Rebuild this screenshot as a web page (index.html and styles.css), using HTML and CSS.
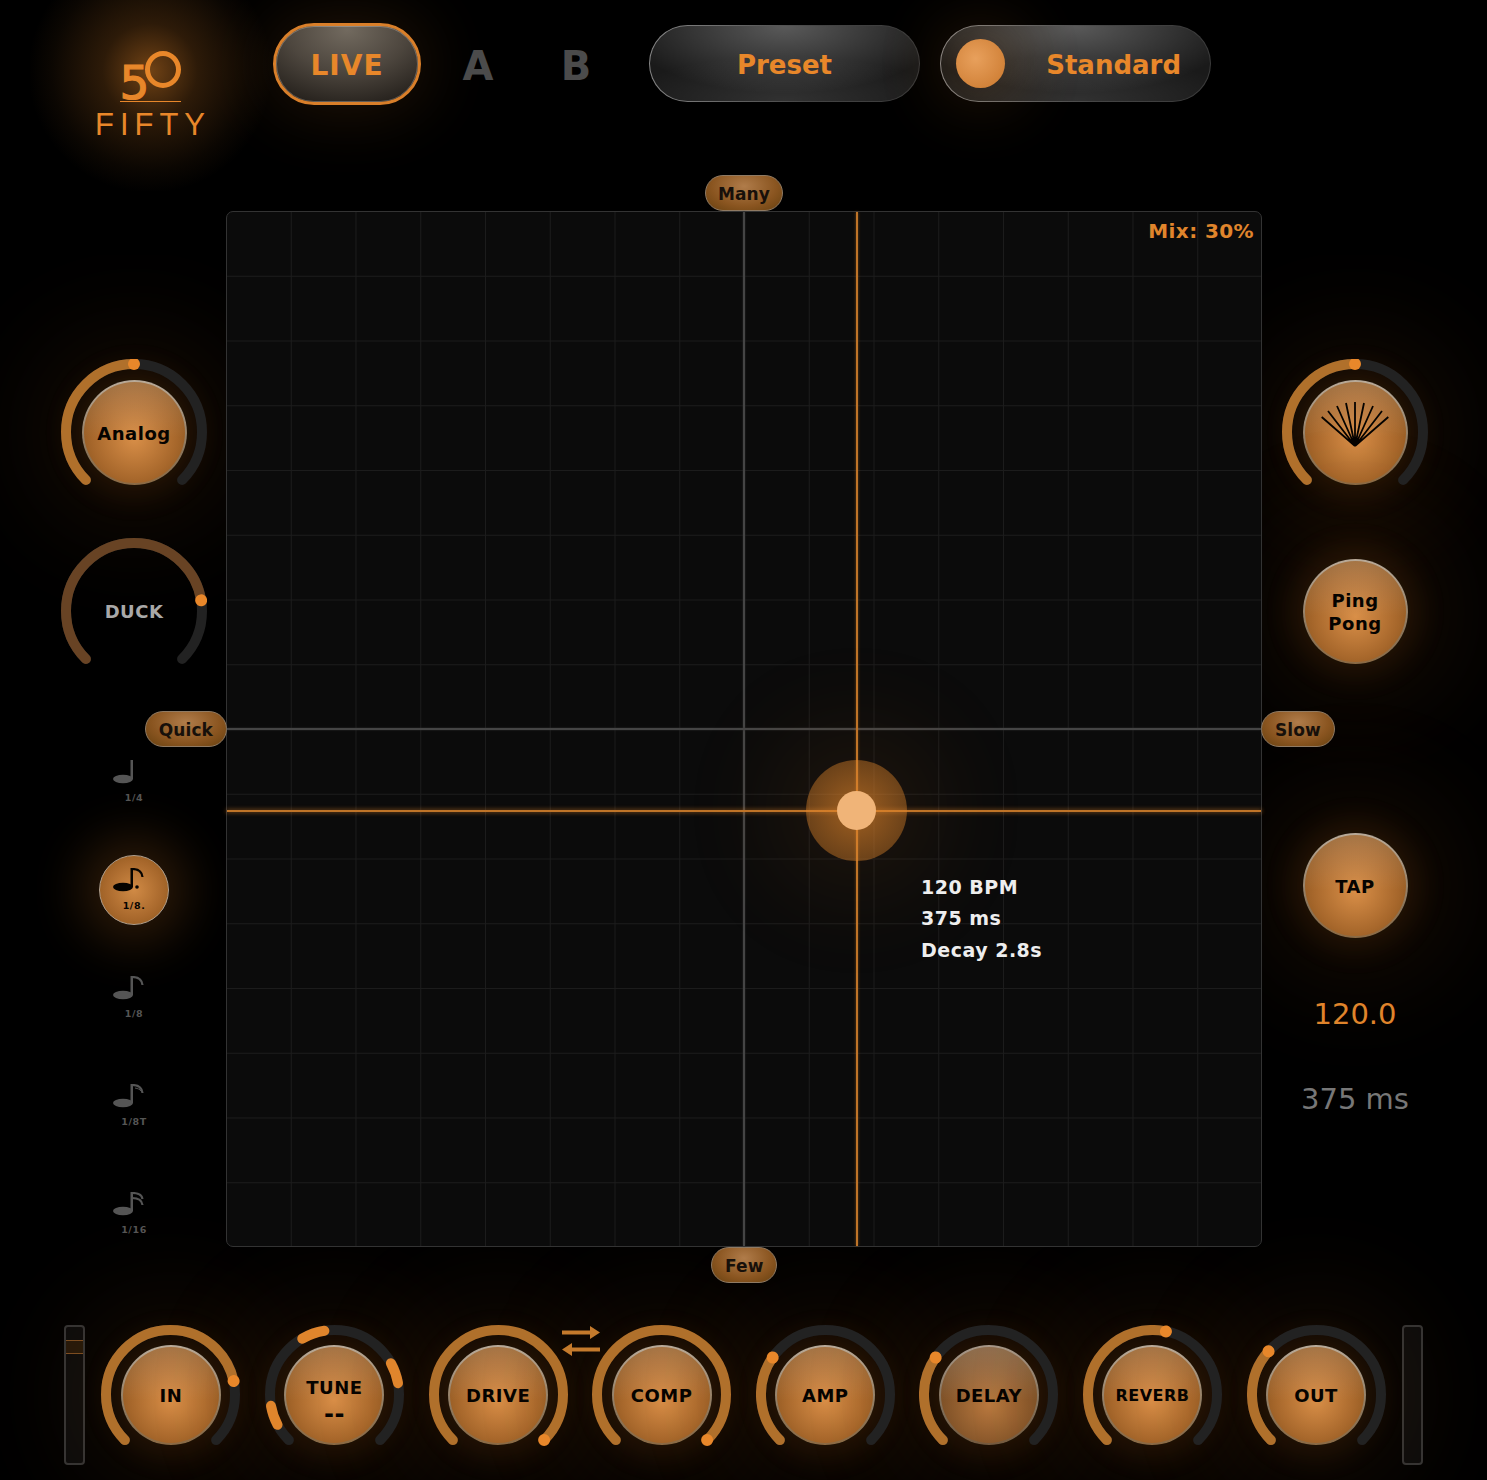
FILE: index.html
```html
<!DOCTYPE html>
<html>
	<head>
		<meta charset="UTF-8">
		<title>Fifty</title>
		<link rel="stylesheet" href="styles.css">
	</head>
	<body>
		<div id="app">
			<div class="header">
				<div class="logo">
					<div class="logoMark"><span class="logoFive">5</span><span class="logoRing"></span></div>
					<div class="logoName">FIFTY</div>
				</div>
				<div class="liveBtn">LIVE</div>
				<div class="slot slotA">A</div>
				<div class="slot">B</div>
				<div class="pill preset">Preset</div>
				<div class="pill toggle"><span class="thumb"></span><span class="toggleText">Standard</span></div>
			</div>

			<div class="middle">
				<div class="sideLeft">
					<div class="knob">
						<svg class="ring" viewBox="0 0 146 146">
							<circle class="track" cx="73" cy="73" r="68" pathLength="360" stroke-dasharray="270 90" transform="rotate(135 73 73)"/>
							<circle class="fill" cx="73" cy="73" r="68" pathLength="360" stroke-dasharray="135 360" transform="rotate(135 73 73)"/>
							<circle class="dot" cx="141" cy="73" r="6" transform="rotate(270 73 73)"/>
						</svg>
						<div class="btn big">Analog</div>
					</div>
					<div class="knob duck">
						<svg class="ring" viewBox="0 0 146 146">
							<circle class="track" cx="73" cy="73" r="68" pathLength="360" stroke-dasharray="270 90" transform="rotate(135 73 73)"/>
							<circle class="fill dim" cx="73" cy="73" r="68" pathLength="360" stroke-dasharray="216 360" transform="rotate(135 73 73)"/>
							<circle class="dot" cx="141" cy="73" r="6" transform="rotate(351 73 73)"/>
						</svg>
						<div class="duckText">DUCK</div>
					</div>
					<div class="notes">
						<div class="note">
							<svg class="noteIcon" viewBox="0 0 42 26"><ellipse cx="10" cy="19" rx="10" ry="4.2"/><rect x="17.5" y="0" width="2.5" height="19"/></svg>
							<span class="noteText">1/4</span>
						</div>
						<div class="note on">
							<svg class="noteIcon" viewBox="0 0 42 26"><ellipse cx="10" cy="19" rx="10" ry="4.2"/><rect x="17.5" y="0" width="2.5" height="19"/><path class="flag" d="M19 1c6 0 10 3 10.500 8"/><circle cx="24" cy="19" r="1.800"/></svg>
							<span class="noteText">1/8.</span>
						</div>
						<div class="note">
							<svg class="noteIcon" viewBox="0 0 42 26"><ellipse cx="10" cy="19" rx="10" ry="4.2"/><rect x="17.5" y="0" width="2.5" height="19"/><path class="flag" d="M19 1c6 0 10 3 10.500 8"/></svg>
							<span class="noteText">1/8</span>
						</div>
						<div class="note">
							<svg class="noteIcon" viewBox="0 0 42 26"><ellipse cx="10" cy="19" rx="10" ry="4.2"/><rect x="17.5" y="0" width="2.5" height="19"/><path class="flag" d="M19 1c6 0 10 3 10.500 8"/><path class="flag thin" d="M22 4c3 .5 5 1.500 6 3"/></svg>
							<span class="noteText">1/8T</span>
						</div>
						<div class="note">
							<svg class="noteIcon" viewBox="0 0 42 26"><ellipse cx="10" cy="19" rx="10" ry="4.2"/><rect x="17.5" y="0" width="2.5" height="19"/><path class="flag" d="M19 1c6 0 10 2 10.500 6"/><path class="flag" d="M19 6c6 0 10 2 10.500 7"/></svg>
							<span class="noteText">1/16</span>
						</div>
					</div>
				</div>

				<div class="pad">
					<div class="tag tagMany">Many</div>
					<div class="tag tagFew">Few</div>
					<div class="tag tagQuick">Quick</div>
					<div class="tag tagSlow">Slow</div>
					<div class="axis axisV"></div>
					<div class="axis axisH"></div>
					<div class="cross crossV"></div>
					<div class="cross crossH"></div>
					<div class="puck"><div class="puckCore"></div></div>
					<div class="mix">Mix: 30%</div>
					<div class="info">120 BPM<br>375 ms<br>Decay 2.8s</div>
				</div>

				<div class="sideRight">
					<div class="knob">
						<svg class="ring" viewBox="0 0 146 146">
							<circle class="track" cx="73" cy="73" r="68" pathLength="360" stroke-dasharray="270 90" transform="rotate(135 73 73)"/>
							<circle class="fill" cx="73" cy="73" r="68" pathLength="360" stroke-dasharray="135 360" transform="rotate(135 73 73)"/>
							<circle class="dot" cx="141" cy="73" r="6" transform="rotate(270 73 73)"/>
						</svg>
						<div class="btn big">
							<svg class="fan" viewBox="0 0 70 46">
								<path d="M35 44L1.700 15M35 44L8 9M35 44L17 4M35 44L26 1M35 44V0M35 44L44 1M35 44L53 4M35 44L62 9M35 44L68.300 15"/>
							</svg>
						</div>
					</div>
					<div class="knob ping">
						<div class="btn big tight">Ping<br>Pong</div>
					</div>
					<div class="knob tap">
						<div class="btn big">TAP</div>
					</div>
					<div class="bpm">120.0</div>
					<div class="ms">375 ms</div>
				</div>
			</div>

			<div class="footer">
				<div class="meter"><div class="meterLevel"></div></div>
				<div class="knobs">
					<div class="knob small">
						<svg class="ring" viewBox="0 0 139 139">
							<circle class="track" cx="69.500" cy="69.500" r="64.500" pathLength="360" stroke-dasharray="270 90" transform="rotate(135 69.500 69.500)"/>
							<circle class="fill" cx="69.500" cy="69.500" r="64.500" pathLength="360" stroke-dasharray="213 360" transform="rotate(135 69.500 69.500)"/>
							<circle class="dot" cx="134" cy="69.500" r="6" transform="rotate(348 69.500 69.500)"/>
						</svg>
						<div class="btn">IN</div>
					</div>
					<div class="knob small">
						<svg class="ring" viewBox="0 0 139 139">
							<circle class="track" cx="69.500" cy="69.500" r="64.500" pathLength="360" stroke-dasharray="270 90" transform="rotate(135 69.500 69.500)"/>
							<circle class="seg" cx="69.500" cy="69.500" r="64.500" pathLength="360" stroke-dasharray="18 360" transform="rotate(152 69.500 69.500)"/>
							<circle class="seg" cx="69.500" cy="69.500" r="64.500" pathLength="360" stroke-dasharray="21 360" transform="rotate(240 69.500 69.500)"/>
							<circle class="seg" cx="69.500" cy="69.500" r="64.500" pathLength="360" stroke-dasharray="19 360" transform="rotate(331 69.500 69.500)"/>
						</svg>
						<div class="btn tune">TUNE<span class="tuneValue">--</span></div>
					</div>
					<div class="knob small">
						<svg class="ring" viewBox="0 0 139 139">
							<circle class="fill" cx="69.500" cy="69.500" r="64.500" pathLength="360" stroke-dasharray="270 90" transform="rotate(135 69.500 69.500)"/>
							<circle class="dot" cx="134" cy="69.500" r="6" transform="rotate(45 69.500 69.500)"/>
						</svg>
						<div class="btn">DRIVE</div>
					</div>
					<div class="knob small">
						<svg class="ring" viewBox="0 0 139 139">
							<circle class="fill" cx="69.500" cy="69.500" r="64.500" pathLength="360" stroke-dasharray="270 90" transform="rotate(135 69.500 69.500)"/>
							<circle class="dot" cx="134" cy="69.500" r="6" transform="rotate(45 69.500 69.500)"/>
						</svg>
						<div class="btn">COMP</div>
						<svg class="swap" viewBox="0 0 38 30">
							<path d="M0 4.500H28V0L38 6.500L28 13V8.500H0Z"/>
							<path d="M38 21.500H10V17L0 23.500L10 30V25.500H38Z"/>
						</svg>
					</div>
					<div class="knob small">
						<svg class="ring" viewBox="0 0 139 139">
							<circle class="track" cx="69.500" cy="69.500" r="64.500" pathLength="360" stroke-dasharray="270 90" transform="rotate(135 69.500 69.500)"/>
							<circle class="fill" cx="69.500" cy="69.500" r="64.500" pathLength="360" stroke-dasharray="80 360" transform="rotate(135 69.500 69.500)"/>
							<circle class="dot" cx="134" cy="69.500" r="6" transform="rotate(215 69.500 69.500)"/>
						</svg>
						<div class="btn">AMP</div>
					</div>
					<div class="knob small">
						<svg class="ring" viewBox="0 0 139 139">
							<circle class="track" cx="69.500" cy="69.500" r="64.500" pathLength="360" stroke-dasharray="270 90" transform="rotate(135 69.500 69.500)"/>
							<circle class="fill" cx="69.500" cy="69.500" r="64.500" pathLength="360" stroke-dasharray="80 360" transform="rotate(135 69.500 69.500)"/>
							<circle class="dot" cx="134" cy="69.500" r="6" transform="rotate(215 69.500 69.500)"/>
						</svg>
						<div class="btn faded">DELAY</div>
					</div>
					<div class="knob small">
						<svg class="ring" viewBox="0 0 139 139">
							<circle class="track" cx="69.500" cy="69.500" r="64.500" pathLength="360" stroke-dasharray="270 90" transform="rotate(135 69.500 69.500)"/>
							<circle class="fill" cx="69.500" cy="69.500" r="64.500" pathLength="360" stroke-dasharray="147 360" transform="rotate(135 69.500 69.500)"/>
							<circle class="dot" cx="134" cy="69.500" r="6" transform="rotate(282 69.500 69.500)"/>
						</svg>
						<div class="btn narrow">REVERB</div>
					</div>
					<div class="knob small">
						<svg class="ring" viewBox="0 0 139 139">
							<circle class="track" cx="69.500" cy="69.500" r="64.500" pathLength="360" stroke-dasharray="270 90" transform="rotate(135 69.500 69.500)"/>
							<circle class="fill" cx="69.500" cy="69.500" r="64.500" pathLength="360" stroke-dasharray="87 360" transform="rotate(135 69.500 69.500)"/>
							<circle class="dot" cx="134" cy="69.500" r="6" transform="rotate(222 69.500 69.500)"/>
						</svg>
						<div class="btn">OUT</div>
					</div>
				</div>
				<div class="meter"></div>
			</div>
		</div>
	</body>
</html>
```

FILE: styles.css
```css
*{
	margin:0;
	padding:0;
	box-sizing:border-box;
}
html,body{
	background:#000;
}
body{
	font-family:"DejaVu Sans",sans-serif;
	font-weight:bold;
	overflow:hidden;
}
#app{
	position:relative;
	width:1487px;
	height:1480px;
	overflow:hidden;
	background:#000;
}

/* header */
.header{
	display:flex;
	align-items:center;
	height:211px;
	padding:23px 0 106px 95px;
}
.logo{
	position:relative;
	display:flex;
	flex-direction:column;
	align-items:center;
	width:110px;
	align-self:flex-start;
	margin-top:28px;
	color:#e8872a;
}
.logo::before{
	content:"";
	position:absolute;
	left:-65px;
	top:-100px;
	width:240px;
	height:240px;
	background:radial-gradient(circle,rgba(224,132,42,.5) 0,rgba(224,132,42,.2) 28%,rgba(224,132,42,.05) 58%,transparent 72%);
}
.logoMark{
	position:relative;
	display:flex;
	width:61px;
	height:51px;
	border-bottom:1px solid #e8872a;
}
.logoFive{
	font-weight:normal;
	font-size:47px;
	line-height:36px;
	margin-top:14px;
	-webkit-text-stroke:1.200px #e8872a;
}
.logoRing{
	flex:none;
	width:36px;
	height:37px;
	margin-left:-4px;
	border:5px solid #e8872a;
	border-radius:50%;
}
.logoName{
	position:relative;
	font-family:"Liberation Sans",sans-serif;
	font-weight:normal;
	font-size:31px;
	line-height:24px;
	letter-spacing:6px;
	margin-right:-6px;
	margin-top:11px;
	white-space:nowrap;
}
.liveBtn{
	display:flex;
	align-items:center;
	justify-content:center;
	width:148px;
	height:82px;
	margin-left:68px;
	padding-top:2px;
	border:3px solid #d97f2a;
	border-radius:41px;
	background:radial-gradient(ellipse 85% 110% at 50% 5%,#726a5f 0,#4d463e 50%,#1f1b17 100%);
	box-shadow:0 0 70px 4px rgba(224,132,42,.16),inset 0 0 0 1px rgba(255,255,255,.25);
	color:#e8872a;
	font-size:28px;
	letter-spacing:1px;
}
.slot{
	width:98px;
	padding-top:3px;
	text-align:center;
	font-size:40px;
	color:#4b4b4b;
}
.slotA{
	margin-left:8px;
}
.pill{
	display:flex;
	align-items:center;
	align-self:flex-start;
	width:271px;
	height:77px;
	margin-top:2px;
	border:1.5px solid transparent;
	border-radius:39px;
	background:radial-gradient(ellipse 60% 90% at 50% 0,rgba(255,255,255,.28),transparent 100%) padding-box,radial-gradient(ellipse 60% 60% at 50% 100%,rgba(255,255,255,.1),transparent 100%) padding-box,linear-gradient(#1a1a1a,#1a1a1a) padding-box,linear-gradient(100deg,#8a8a8a,#444 60%,#3a3a3a) border-box;
	color:#e8872a;
	font-size:26px;
}
.preset{
	justify-content:center;
	margin-left:24px;
	padding-top:2px;
}
.toggle{
	margin-left:20px;
	padding:0 29px 0 15px;
	justify-content:space-between;
}
.toggleText{
	padding-top:3px;
}
.thumb{
	width:49px;
	height:49px;
	border-radius:50%;
	background:radial-gradient(circle at 40% 40%,#e8a05c,#c9772c);
	box-shadow:0 0 70px 12px rgba(224,132,42,.22);
}

/* middle */
.middle{
	display:flex;
	height:1036px;
}
.sideLeft{
	display:flex;
	flex-direction:column;
	align-items:center;
	width:226px;
	padding:148px 19px 0 61px;
}
.sideRight{
	display:flex;
	flex-direction:column;
	align-items:center;
	width:225px;
	padding:148px 59px 0 20px;
}
.pad{
	position:relative;
	z-index:3;
	width:1036px;
	height:1036px;
	border:1px solid #333;
	border-radius:7px;
	background:linear-gradient(90deg,#1c1c1c 1px,transparent 1px) -1px -1px/64.75px 64.75px,linear-gradient(#1c1c1c 1px,transparent 1px) -1px -1px/64.75px 64.75px,#0b0b0b;
}
.knob{
	position:relative;
	display:grid;
	place-items:center;
	width:146px;
	height:146px;
}
.knob > *{
	grid-area:1/1;
}
.knob.small{
	width:139px;
	height:139px;
}
.duck,.ping{
	margin-top:33px;
}
.tap{
	margin-top:128px;
}
.ring{
	position:relative;
	z-index:2;
	width:100%;
	height:100%;
	display:block;
}
.track,.fill,.seg{
	fill:none;
	stroke-width:10;
	stroke-linecap:round;
}
.track{
	stroke:#222;
}
.fill{
	stroke:#b0702b;
}
.fill.dim{
	stroke:#684324;
}
.seg{
	stroke:#e0852c;
}
.dot{
	fill:#e8872a;
}
.btn{
	position:relative;
	z-index:1;
	display:flex;
	flex-direction:column;
	align-items:center;
	justify-content:center;
	width:100px;
	height:100px;
	border:2px solid transparent;
	border-radius:50%;
	background:linear-gradient(rgba(255,255,255,.16),transparent 55%) padding-box,radial-gradient(circle at 50% 55%,#d98f48 0,#a8682c 55%,#784815 100%) padding-box,linear-gradient(#b9aa98,#8b7458 70%,#8b6a44) border-box;
	box-shadow:0 0 30px 12px rgba(224,132,42,.1),0 0 120px 40px rgba(224,132,42,.11);
	color:#050300;
	font-size:18px;
	letter-spacing:.5px;
	text-align:center;
}
.footer .btn{
	padding-top:2px;
}
.btn.big{
	width:105px;
	height:105px;
	padding-top:2px;
}
.btn.tight{
	line-height:23px;
}
.footer .btn.narrow{
	font-size:16px;
}
.btn.faded{
	background:linear-gradient(rgba(255,255,255,.2),transparent 55%) padding-box,radial-gradient(circle at 50% 60%,#b9793f 0,#86562a 55%,#5f3d1a 100%) padding-box,linear-gradient(#a89888,#7c6a54 70%,#745a3e) border-box;
}
.footer .tune{
	line-height:26px;
	padding-top:13px;
}
.tuneValue{
	display:block;
	font-size:24px;
}
.duckText{
	color:#a9a9a9;
	font-size:18px;
	letter-spacing:.5px;
}
.fan{
	width:70px;
	height:46px;
	margin-bottom:16px;
}
.fan path{
	fill:none;
	stroke:#050300;
	stroke-width:1.800;
}
.bpm,.ms{
	font-weight:normal;
	font-size:29px;
	line-height:36px;
	white-space:nowrap;
}
.bpm{
	margin-top:38px;
	color:#e0852c;
}
.ms{
	margin-top:49px;
	color:#777;
}

/* note values */
.notes{
	display:flex;
	flex-direction:column;
	align-items:center;
	margin-top:63px;
	gap:38px;
}
.note{
	display:flex;
	flex-direction:column;
	align-items:center;
	width:70px;
	height:70px;
	padding-top:13px;
	border-radius:50%;
	color:#555;
}
.noteIcon{
	flex:none;
	width:42px;
	height:26px;
	display:block;
	fill:currentColor;
}
.flag{
	fill:none;
	stroke:currentColor;
	stroke-width:2.200;
}
.flag.thin{
	stroke-width:1;
}
.noteText{
	font-size:9.500px;
	line-height:14px;
	letter-spacing:.6px;
	margin-top:5px;
}
.note.on{
	border:1.500px solid #b3a08c;
	padding-top:11.500px;
	background:radial-gradient(circle,#d08a45 0,#a8682c 60%,#8a5518 100%);
	box-shadow:0 0 50px 18px rgba(224,132,42,.2);
	color:#050300;
}

/* things on the pad */
.tag{
	position:absolute;
	height:36px;
	line-height:36px;
	padding:0 13px;
	border:1px solid #8f7a63;
	border-radius:18px;
	background:radial-gradient(ellipse at 50% 30%,#b07c4a 0,#8a5520 60%,#66400f 100%);
	color:#17100a;
	font-size:17px;
	letter-spacing:.1px;
	white-space:nowrap;
}
.tagMany{
	left:478px;
	top:-37px;
	padding:0 12px;
}
.tagFew{
	left:484px;
	bottom:-37px;
}
.tagQuick{
	right:100%;
	top:499px;
}
.tagSlow{
	left:100%;
	top:499px;
}
.axis,.cross{
	position:absolute;
}
.axisV{
	left:516px;
	top:0;
	bottom:0;
	width:2px;
	background:#454545;
	box-shadow:0 0 2px #333;
}
.axisH{
	left:0;
	right:0;
	top:516px;
	height:2px;
	background:#454545;
	box-shadow:0 0 2px #333;
}
.crossV{
	left:629px;
	top:0;
	bottom:0;
	width:2px;
	background:#bf7428;
	box-shadow:0 0 3px rgba(224,132,42,.5);
}
.crossH{
	left:0;
	right:0;
	top:598px;
	height:2px;
	background:#bf7428;
	box-shadow:0 0 4px 1px rgba(224,132,42,.4);
}
.puck{
	position:absolute;
	left:579px;
	top:548px;
	display:flex;
	align-items:center;
	justify-content:center;
	width:101px;
	height:101px;
	border-radius:50%;
	background:radial-gradient(circle,rgba(224,132,42,.7) 0,rgba(224,132,42,.35) 100%);
	box-shadow:0 0 110px 30px rgba(224,132,42,.1);
}
.puckCore{
	width:39px;
	height:39px;
	border-radius:50%;
	background:#f0b478;
}
.mix{
	position:absolute;
	right:7px;
	top:7px;
	color:#e0852c;
	font-size:20px;
	letter-spacing:.4px;
}
.info{
	position:absolute;
	left:694px;
	top:660px;
	color:#eee;
	font-size:19px;
	line-height:31.400px;
	letter-spacing:.5px;
}

/* footer */
.footer{
	display:flex;
	padding:78px 0 0 64px;
}
.knobs{
	display:flex;
	gap:24.600px;
	margin:0 16.600px 0 16.400px;
}
.meter{
	width:21px;
	height:140px;
	padding-top:13px;
	border:2px solid #333;
	border-radius:4px;
	background:#0b0b0b;
}
.meterLevel{
	height:14px;
	border:solid #7a4c20;
	border-width:1px 0;
	background:#241709;
}
.swap{
	position:absolute;
	z-index:2;
	left:-30.500px;
	top:1px;
	width:38px;
	height:30px;
	fill:#c47a2c;
}
```
